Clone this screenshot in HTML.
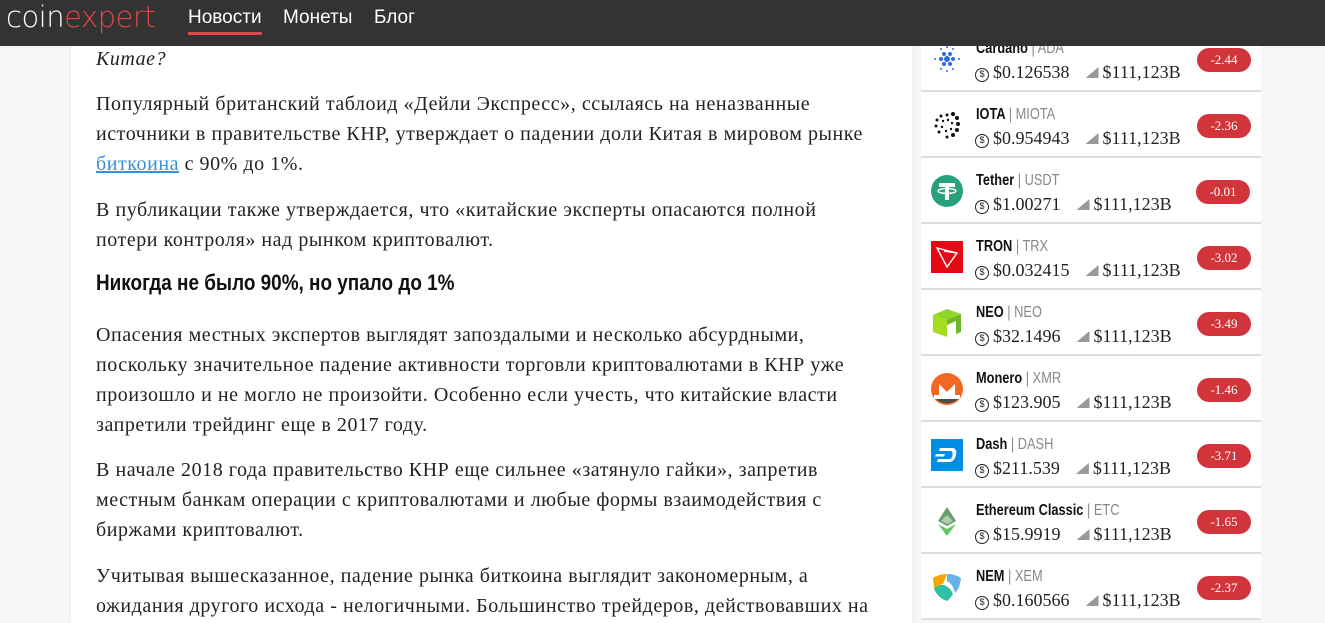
<!DOCTYPE html>
<html><head><meta charset="utf-8"><style>
*{margin:0;padding:0;box-sizing:border-box}
body{width:1325px;height:623px;overflow:hidden;background:#f7f7f7;position:relative;font-family:"Liberation Serif",serif}
.hdr{position:absolute;top:0;left:0;width:1325px;height:46px;background:#333;z-index:5}
.logo{position:absolute;left:6px;top:0px;font-family:"DejaVu Sans","Liberation Sans",sans-serif;font-size:29px;color:#fff;letter-spacing:-0.5px;font-weight:300}
.logo span{color:#e0474c}
.nav{position:absolute;top:7px;font-family:"Liberation Sans",sans-serif;font-size:19px;color:#fff}
.nav.a:after{content:"";position:absolute;left:0;right:0;top:25px;height:3px;background:#e0474c}
.art{position:absolute;left:71px;top:0;width:841px;height:623px;background:#fff;box-shadow:0 0 8px rgba(0,0,0,.06)}
.art p{position:absolute;left:25px;font-size:20px;line-height:30px;color:#222;white-space:nowrap;letter-spacing:0.55px}
.art h2{position:absolute;left:25px;top:270px;font-family:"Liberation Sans",sans-serif;font-weight:bold;font-size:22px;color:#111;transform:scaleX(.86);transform-origin:left;white-space:nowrap}
a{color:#3a8fd6}
.side{position:absolute;left:921px;top:0;width:340px;height:623px}
.row{position:absolute;left:0;width:340px;height:66px;background:#fff;border-bottom:2px solid #ddd}
.ic{position:absolute;left:10px;top:17px;width:32px;height:32px}
.nm{position:absolute;left:55px;top:14px;font-family:"Liberation Sans",sans-serif;font-weight:bold;font-size:16px;color:#111;transform:scaleX(.8);transform-origin:left;white-space:nowrap}
.nm i{font-style:normal;font-weight:normal;color:#888}
.pr{position:absolute;left:54px;top:36px;font-size:18px;color:#222;white-space:nowrap}
.pr b{font-weight:normal;display:inline-block;width:14px;height:14px;border:1.5px solid #222;border-radius:50%;font-size:9px;line-height:11px;text-align:center;vertical-align:1px;margin-right:4px;font-family:"Liberation Sans",sans-serif}
.pr u{text-decoration:none;display:inline-block;width:13px;height:11px;margin:0 4px 0 16px;background:#999;clip-path:polygon(0 100%,100% 0,100% 100%);}
.bd{position:absolute;left:276px;top:22px;width:54px;height:24px;border-radius:12px;background:#d1343a;color:#fff;font-size:13px;line-height:24px;text-align:center}
</style></head><body>
<div class="art">
<p style="top:44px;font-style:italic">Китае?</p>
<p style="top:89px">Популярный британский таблоид «Дейли Экспресс», ссылаясь на неназванные<br>источники в правительстве КНР, утверждает о падении доли Китая в мировом рынке<br><a href="#">биткоина</a> с 90% до 1%.</p>
<p style="top:195px">В публикации также утверждается, что «китайские эксперты опасаются полной<br>потери контроля» над рынком криптовалют.</p>
<h2>Никогда не было 90%, но упало до 1%</h2>
<p style="top:320px">Опасения местных экспертов выглядят запоздалыми и несколько абсурдными,<br>поскольку значительное падение активности торговли криптовалютами в КНР уже<br>произошло и не могло не произойти. Особенно если учесть, что китайские власти<br>запретили трейдинг еще в 2017 году.</p>
<p style="top:455px">В начале 2018 года правительство КНР еще сильнее «затянуло гайки», запретив<br>местным банкам операции с криптовалютами и любые формы взаимодействия с<br>биржами криптовалют.</p>
<p style="top:561px">Учитывая вышесказанное, падение рынка биткоина выглядит закономерным, а<br>ожидания другого исхода - нелогичными. Большинство трейдеров, действовавших на</p>
</div>
<div class="side">
<div class="row" style="top:26px"><svg class="ic" viewBox="0 0 32 32"><g fill="#2a6fe0"><circle cx="16" cy="16" r="3"/><circle cx="10" cy="16" r="2"/><circle cx="22" cy="16" r="2"/><circle cx="13" cy="11" r="2"/><circle cx="19" cy="11" r="2"/><circle cx="13" cy="21" r="2"/><circle cx="19" cy="21" r="2"/><circle cx="4" cy="16" r="1"/><circle cx="28" cy="16" r="1"/><circle cx="10" cy="6" r="1"/><circle cx="22" cy="6" r="1"/><circle cx="10" cy="26" r="1"/><circle cx="22" cy="26" r="1"/><circle cx="16" cy="4" r="1"/><circle cx="16" cy="28" r="1"/></g></svg><div class="nm">Cardano <i>| ADA</i></div><div class="pr"><b>$</b>$0.126538<u></u>$111,123B</div><div class="bd">-2.44</div></div>
<div class="row" style="top:92px"><svg class="ic" viewBox="0 0 32 32"><g fill="#111"><circle cx="22" cy="5" r="2"/><circle cx="26" cy="9" r="2"/><circle cx="27" cy="15" r="2"/><circle cx="26" cy="21" r="2"/><circle cx="22" cy="26" r="2"/><circle cx="16" cy="28" r="1.5"/><circle cx="16" cy="6" r="1.5"/><circle cx="10" cy="7" r="1.5"/><circle cx="6" cy="11" r="1.5"/><circle cx="5" cy="17" r="1.5"/><circle cx="8" cy="23" r="1.5"/><circle cx="12" cy="12" r="1.2"/><circle cx="11" cy="18" r="1.2"/><circle cx="15" cy="22" r="1.2"/><circle cx="20" cy="20" r="1.2"/><circle cx="21" cy="14" r="1.2"/><circle cx="17" cy="11" r="1.2"/></g></svg><div class="nm">IOTA <i>| MIOTA</i></div><div class="pr"><b>$</b>$0.954943<u></u>$111,123B</div><div class="bd">-2.36</div></div>
<div class="row" style="top:158px"><svg class="ic" viewBox="0 0 32 32"><circle cx="16" cy="16" r="16" fill="#26a17b"/><path d="M8 8h16v4h-6v13h-4V12H8z" fill="#fff"/><ellipse cx="16" cy="16" rx="9" ry="2.5" fill="none" stroke="#fff" stroke-width="1.5"/></svg><div class="nm">Tether <i>| USDT</i></div><div class="pr"><b>$</b>$1.00271<u></u>$111,123B</div><div class="bd" style="left:275px">-0.01</div></div>
<div class="row" style="top:224px"><svg class="ic" viewBox="0 0 32 32"><rect width="32" height="32" fill="#e50915"/><path d="M6 7l20 5-10 14zM6 7l10 19M26 12l-13-2" fill="none" stroke="#fff" stroke-width="1.4"/></svg><div class="nm">TRON <i>| TRX</i></div><div class="pr"><b>$</b>$0.032415<u></u>$111,123B</div><div class="bd">-3.02</div></div>
<div class="row" style="top:290px"><svg class="ic" viewBox="0 0 32 32"><path d="M2 8l14-6 14 5-14 6z" fill="#8fd62a"/><path d="M2 8l14 5v17L2 25z" fill="#a6dc1e"/><path d="M16 13l14-6v18l-5 2V14l-9 4z" fill="#6cb82a"/></svg><div class="nm">NEO <i>| NEO</i></div><div class="pr"><b>$</b>$32.1496<u></u>$111,123B</div><div class="bd">-3.49</div></div>
<div class="row" style="top:356px"><svg class="ic" viewBox="0 0 32 32"><circle cx="16" cy="16" r="16" fill="#f26822"/><path d="M3 22h5V11l8 8 8-8v11h5v4H3z" fill="#fff"/><path d="M5 26h22a16 16 0 0 1-22 0z" fill="#4c4c4c"/></svg><div class="nm">Monero <i>| XMR</i></div><div class="pr"><b>$</b>$123.905<u></u>$111,123B</div><div class="bd">-1.46</div></div>
<div class="row" style="top:422px"><svg class="ic" viewBox="0 0 32 32"><rect width="32" height="32" fill="#008de4"/><path d="M9 9h12c4 0 5 3 4 7s-3 7-7 7H6l1-3h11c2 0 3-1 3.5-4S21 12 19 12H8z M5 15h9l-1 2.5H4z" fill="#fff"/></svg><div class="nm">Dash <i>| DASH</i></div><div class="pr"><b>$</b>$211.539<u></u>$111,123B</div><div class="bd">-3.71</div></div>
<div class="row" style="top:488px"><svg class="ic" viewBox="0 0 32 32"><path d="M16 2l9 14-9 5-9-5z" fill="#699b72"/><path d="M7 19l9 5 9-5-9 12z" fill="#3ab83a" opacity=".8"/><path d="M16 10l6 6-6 3-6-3z" fill="#aacfa9"/></svg><div class="nm">Ethereum Classic <i>| ETC</i></div><div class="pr"><b>$</b>$15.9919<u></u>$111,123B</div><div class="bd">-1.65</div></div>
<div class="row" style="top:554px"><svg class="ic" viewBox="0 0 32 32"><path d="M2 7q6-4 14-4l-4 10q-5 1-9 5z" fill="#f7a800"/><path d="M16 3q8 0 14 4-1 10-6 15-2-9-8-12z" fill="#67b2e8"/><path d="M3 18q4-5 10-4 6 2 9 9-3 5-6 7-9-3-13-12z" fill="#2fc1a5"/></svg><div class="nm">NEM <i>| XEM</i></div><div class="pr"><b>$</b>$0.160566<u></u>$111,123B</div><div class="bd">-2.37</div></div>
</div>
<div class="hdr">
<div class="logo">coin<span>expert</span></div>
<div class="nav a" style="left:188px">Новости</div>
<div class="nav" style="left:283px">Монеты</div>
<div class="nav" style="left:374px">Блог</div>
</div>
</body></html>
